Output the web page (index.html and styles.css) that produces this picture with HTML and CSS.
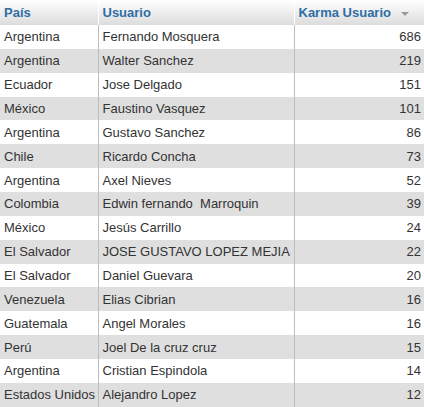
FILE: index.html
```html
<!DOCTYPE html>
<html>
<head>
<meta charset="utf-8">
<link rel="stylesheet" href="styles.css">
</head>
<body>
<table class="karma">
  <colgroup><col class="c1"><col class="c2"><col class="c3"></colgroup>
  <thead>
    <tr><th>País</th><th>Usuario</th><th class="sorted">Karma Usuario <span class="arrow"></span></th></tr>
  </thead>
  <tbody>
    <tr><td>Argentina</td><td>Fernando Mosquera</td><td class="num">686</td></tr>
    <tr><td>Argentina</td><td>Walter Sanchez</td><td class="num">219</td></tr>
    <tr><td>Ecuador</td><td>Jose Delgado</td><td class="num">151</td></tr>
    <tr><td>México</td><td>Faustino Vasquez</td><td class="num">101</td></tr>
    <tr><td>Argentina</td><td>Gustavo Sanchez</td><td class="num">86</td></tr>
    <tr><td>Chile</td><td>Ricardo Concha</td><td class="num">73</td></tr>
    <tr><td>Argentina</td><td>Axel Nieves</td><td class="num">52</td></tr>
    <tr><td>Colombia</td><td>Edwin fernando&nbsp; Marroquin</td><td class="num">39</td></tr>
    <tr><td>México</td><td>Jesús Carrillo</td><td class="num">24</td></tr>
    <tr><td>El Salvador</td><td>JOSE GUSTAVO LOPEZ MEJIA</td><td class="num">22</td></tr>
    <tr><td>El Salvador</td><td>Daniel Guevara</td><td class="num">20</td></tr>
    <tr><td>Venezuela</td><td>Elias Cibrian</td><td class="num">16</td></tr>
    <tr><td>Guatemala</td><td>Angel Morales</td><td class="num">16</td></tr>
    <tr><td>Perú</td><td>Joel De la cruz cruz</td><td class="num">15</td></tr>
    <tr><td>Argentina</td><td>Cristian Espindola</td><td class="num">14</td></tr>
    <tr><td>Estados Unidos</td><td>Alejandro Lopez</td><td class="num">12</td></tr>
  </tbody>
</table>
</body>
</html>
```
FILE: styles.css
```css
html, body {
  margin: 0;
  padding: 0;
  background: #fff;
}
.karma {
  border-collapse: collapse;
  table-layout: fixed;
  width: 424px;
  font-family: "Liberation Sans", Arial, sans-serif;
  font-size: 13px;
  color: #333;
}
.c1 { width: 98px; }
.c2 { width: 196px; }
.c3 { width: 130px; }
.karma th {
  height: 25px;
  padding: 0 4px;
  box-sizing: border-box;
  text-align: left;
  font-weight: bold;
  color: #2e6ea5;
  background: linear-gradient(#ffffff, #dcdcdc);
  border-left: 1px solid #fff;
  vertical-align: middle;
  white-space: nowrap;
}
.karma th:first-child { border-left: none; }
.arrow {
  display: inline-block;
  width: 0;
  height: 0;
  margin-left: 6px;
  border-left: 4px solid transparent;
  border-right: 4px solid transparent;
  border-top: 4px solid #9a9a9a;
  vertical-align: middle;
}
.karma td {
  height: 23.87px;
  padding: 0 4px;
  box-sizing: border-box;
  border-left: 1px solid #bdbdbd;
  white-space: nowrap;
  overflow: hidden;
}
.karma td:first-child { border-left: none; }
.karma tbody tr:nth-child(even) td { background: #dfdfdf; }
.karma td.num { text-align: right; padding-right: 3px; }
```
